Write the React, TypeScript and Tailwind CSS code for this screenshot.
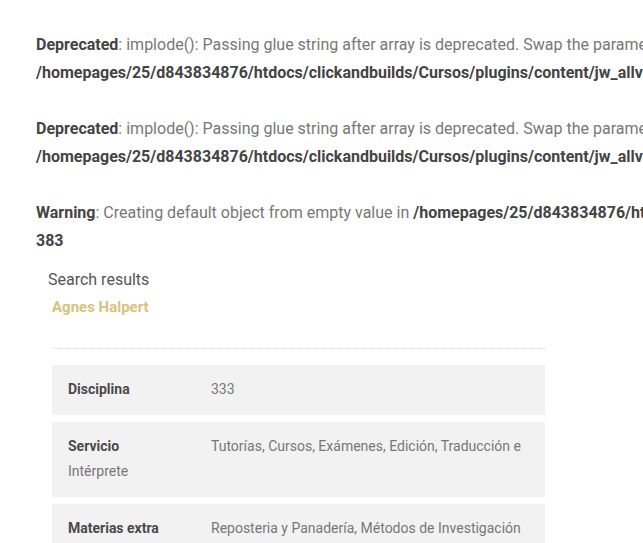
import React from 'react'

const font = { fontFamily: 'Roboto, "Liberation Sans", sans-serif' }

function Notice({ kind, msg, path, tail }: { kind: string; msg: string; path: string; tail: string }) {
  return (
    <div className="whitespace-nowrap text-[16px] leading-[28px] text-[#777]">
      <div>
        <b className="font-bold text-[#444]">{kind}</b>: {msg}
        {path && <b className="font-bold text-[#444]"> {path}</b>}
      </div>
      <div>
        <b className="font-bold text-[#444]">{tail}</b>
      </div>
    </div>
  )
}

const rows = [
  { label: 'Disciplina', value: '333' },
  { label: 'Servicio', value: 'Tutorías, Cursos, Exámenes, Edición, Traducción e Intérprete' },
  { label: 'Materias extra', value: 'Reposteria y Panadería, Métodos de Investigación' },
]

export default function App() {
  return (
    <div className="h-[543px] w-[643px] overflow-hidden bg-white" style={font}>
      <div className="w-[1400px] pl-[36px] pt-[31px]">
        <Notice
          kind="Deprecated"
          msg="implode(): Passing glue string after array is deprecated. Swap the parameters in"
          path=""
          tail="/homepages/25/d843834876/htdocs/clickandbuilds/Cursos/plugins/content/jw_allvideos/jw_allvideos.php on line 73"
        />
        <div className="h-[28px]" />
        <Notice
          kind="Deprecated"
          msg="implode(): Passing glue string after array is deprecated. Swap the parameters in"
          path=""
          tail="/homepages/25/d843834876/htdocs/clickandbuilds/Cursos/plugins/content/jw_allvideos/jw_allvideos.php on line 73"
        />
        <div className="h-[28px]" />
        <Notice
          kind="Warning"
          msg="Creating default object from empty value in"
          path="/homepages/25/d843834876/htdocs/clickandbuilds/Cursos/components/com_profiles/views/profile/view.html.php on line"
          tail="383"
        />
      </div>

      <div className="pl-[48px] pt-[13px]">
        <div className="text-[16px] leading-[24px] text-[#555]">Search results</div>
        <div className="pl-[4px] pt-[4px] text-[15px] font-bold leading-[22px] text-[#d8c27e]">Agnes Halpert</div>
      </div>

      <div className="ml-[52px] mt-[30px] w-[493px] border-t border-dotted border-[#d8d8d8] pt-[16px]">
        <div className="flex flex-col gap-[7px]">
          {rows.map((r) => (
            <div key={r.label} className="bg-[#f2f2f2] px-[16px] pb-[13px] pt-[12px] text-[14px] leading-[25px]">
              <span className="font-bold text-[#4a4a4a]">
                <span className="inline-block w-[143px] align-top">{r.label}</span>
              </span>
              <span className="text-[#777]">{r.value}</span>
            </div>
          ))}
        </div>
      </div>
    </div>
  )
}
